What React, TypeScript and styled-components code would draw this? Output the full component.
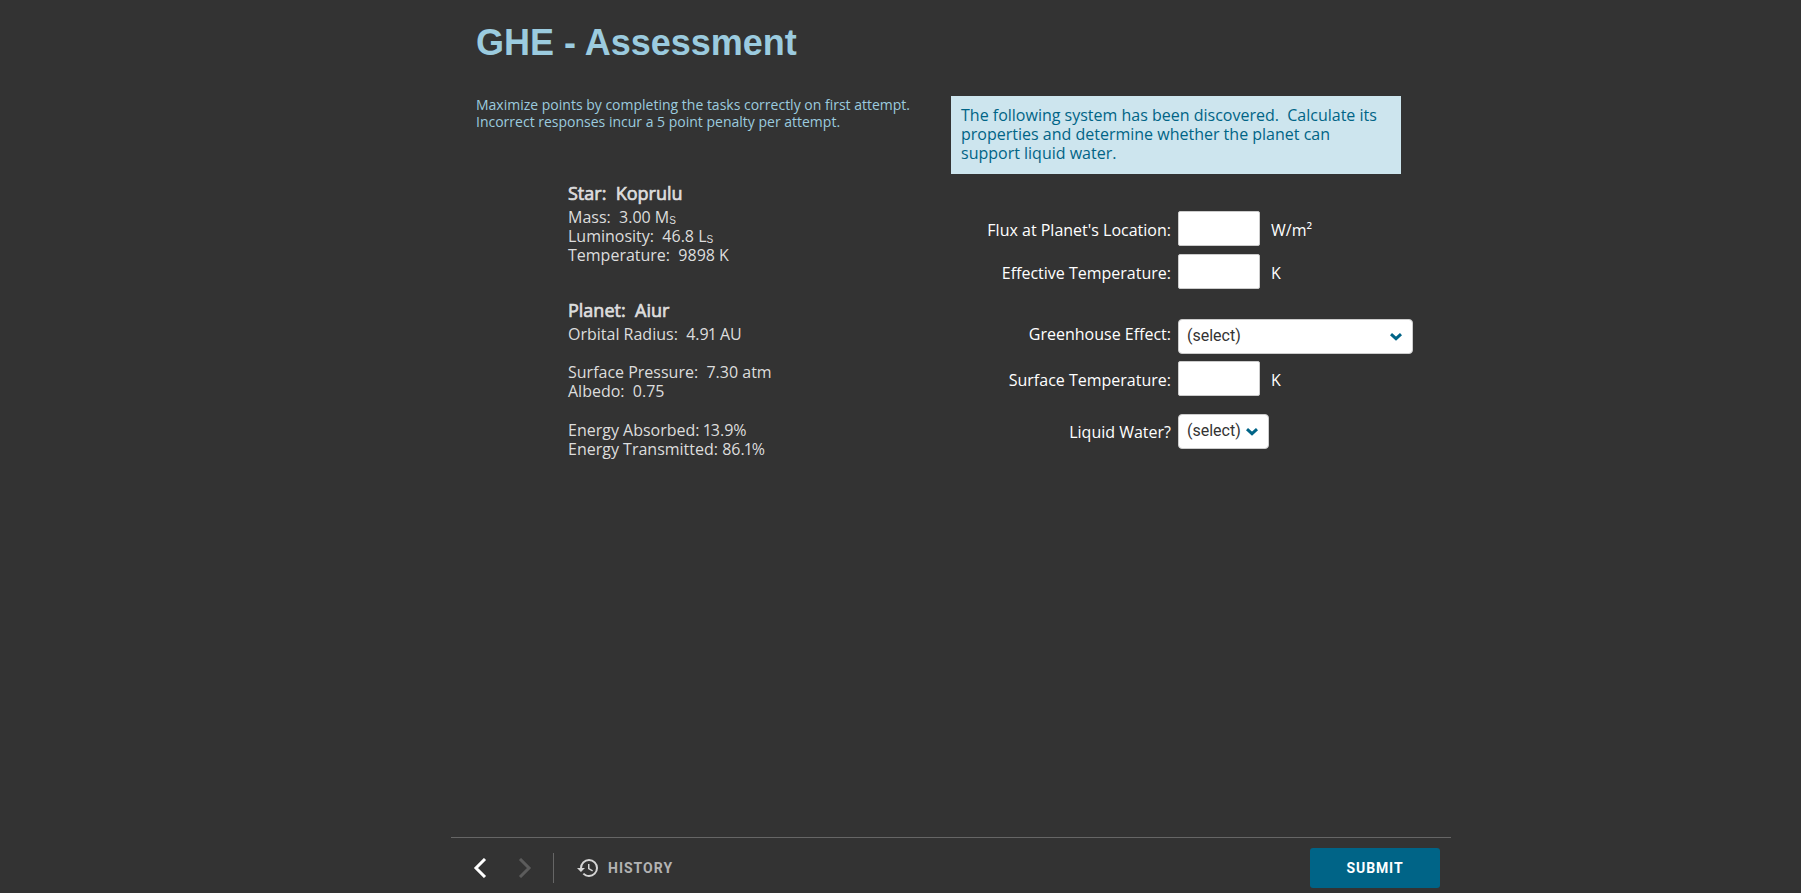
import React from "react";
import styled, { createGlobalStyle } from "styled-components";

const GlobalStyle = createGlobalStyle`
  * { box-sizing: border-box; }
  body { margin: 0; background: #333333; }
`;

const Page = styled.div`
  height: 893px;
  padding-left: 451px;
  background: #333333;
  font-family: "Open Sans", sans-serif;
  font-size: 16px;
  line-height: 19.2px;
  color: #dddddd;
  overflow: hidden;
`;

const Stage = styled.main`
  width: 1000px;
  height: 893px;
  display: flex;
  flex-direction: column;
`;

const Title = styled.h1`
  margin: 0;
  padding: 21px 25px 0;
  height: 96px;
  font: bold 36px/44px "Liberation Sans", Arial, sans-serif;
  color: #9bcbdf;
`;

const Columns = styled.div`
  flex: 1;
  display: grid;
  grid-template-columns: 500px 500px;
`;

const Intro = styled.p`
  margin: 0;
  padding-left: 25px;
  height: 85px;
  font-size: 14px;
  line-height: 17px;
  color: #9bcbdf;
  white-space: nowrap;
`;

const Facts = styled.section`
  padding-left: 117px;
  white-space: pre;
`;

const FactGroup = styled.div<{ $gap: number }>`
  margin-bottom: ${(p) => p.$gap}px;
`;

const FactHeading = styled.h2`
  margin: 0 0 3px;
  font-size: 18px;
  font-weight: 400;
  line-height: 24px;
  -webkit-text-stroke: 0.7px currentColor;
`;

const Sub = styled.span`
  font-family: "Liberation Sans", Arial, sans-serif;
  font-size: 10px;
  line-height: 1;
  position: relative;
  top: 1px;
`;

const TightOne = styled.span`
  margin: 0 -1px;
`;

const Notice = styled.p`
  margin: 0;
  width: 450px;
  height: 78px;
  padding: 10px;
  background: #cde5ee;
  color: #006486;
  white-space: pre;
`;

const Form = styled.form`
  padding-top: 37px;
`;

const Row = styled.div<{ $gap: number }>`
  display: flex;
  height: 35px;
  margin-bottom: ${(p) => p.$gap}px;
  color: #ffffff;
`;

const Label = styled.label<{ $drop: number }>`
  width: 220px;
  margin-right: 7px;
  padding-top: ${(p) => p.$drop}px;
  text-align: right;
`;

const NumberField = styled.input`
  width: 82px;
  height: 35px;
  margin: 0 11px 0 0;
  border: 1px solid #cccccc;
  border-radius: 2px;
  background: #ffffff;
`;

const Unit = styled.span`
  padding-top: 10px;
`;

const SelectBox = styled.button<{ $width: number }>`
  display: flex;
  justify-content: space-between;
  align-items: center;
  width: ${(p) => p.$width}px;
  height: 35px;
  padding: 0 10px 2px 8px;
  border: 1px solid #cccccc;
  border-radius: 4px;
  background: #ffffff;
  color: #333333;
  font: 16px/19px Roboto, sans-serif;
`;

const CaretIcon = styled.svg`
  width: 12px;
  height: 8px;
  margin-top: 3px;
`;

const Footer = styled.footer`
  height: 56px;
  padding: 10px 11px 0 20px;
  border-top: 1px solid #666666;
  display: flex;
  align-items: flex-start;
`;

const NavButton = styled.button`
  width: 44px;
  height: 40px;
  padding: 0;
  border: 0;
  background: none;
  display: flex;
  align-items: center;
`;

const Divider = styled.div`
  width: 1px;
  height: 30px;
  margin: 5px 23px 0 -6px;
  background: #666666;
`;

const HistoryButton = styled.button`
  display: flex;
  align-items: center;
  gap: 10px;
  height: 40px;
  padding: 0;
  border: 0;
  background: none;
  color: #b3b3b3;
  font: bold 14px/16px Roboto, sans-serif;
  letter-spacing: 1px;
`;

const SubmitButton = styled.button`
  width: 130px;
  height: 40px;
  margin-left: auto;
  border: 0;
  border-radius: 3px;
  background: #006487;
  color: #ffffff;
  font: bold 14px/16px Roboto, sans-serif;
  letter-spacing: 0.9px;
`;

const Caret = () => (
  <CaretIcon viewBox="0 0 12 8">
    <path d="M1 1.2 6 5.7l5-4.500" fill="none" stroke="#006487" strokeWidth="3" />
  </CaretIcon>
);

const HistoryIcon = () => (
  <svg width="21" height="18" viewBox="0 0 21 18" fill="#d6d6d6">
    <path d="M12 0a9 9 0 0 0-9 9H0l3.9 3.9.07.14L8 9H5a7 7 0 1 1 7 7c-1.930 0-3.680-.79-4.940-2.060l-1.420 1.420A8.950 8.950 0 0 0 12 18a9 9 0 0 0 0-18Zm-1 5v5l4.280 2.540.72-1.210-3.500-2.080V5H11Z" />
  </svg>
);

export default function App() {
  return (
    <>
      <GlobalStyle />
      <Page>
        <Stage>
          <Title>GHE - Assessment</Title>
          <Columns>
            <div>
              <Intro>
                Maximize points by completing the tasks correctly on first attempt.
                <br />
                Incorrect responses incur a 5 point penalty per attempt.
              </Intro>
              <Facts>
                <FactGroup $gap={32}>
                  <FactHeading>{"Star:  Koprulu"}</FactHeading>
                  <div>{"Mass:  3.00 M"}<Sub>S</Sub></div>
                  <div>{"Luminosity:  46.8 L"}<Sub>S</Sub></div>
                  <div>{"Temperature:  9898 K"}</div>
                </FactGroup>
                <FactGroup $gap={19.2}>
                  <FactHeading>{"Planet:  Aiur"}</FactHeading>
                  <div>{"Orbital Radius:  4.9"}<TightOne>1</TightOne>{" AU"}</div>
                </FactGroup>
                <FactGroup $gap={19.2}>
                  <div>{"Surface Pressure:  7.30 atm"}</div>
                  <div>{"Albedo:  0.75"}</div>
                </FactGroup>
                <FactGroup $gap={0}>
                  <div>{"Energy Absorbed: "}<TightOne>1</TightOne>3.9%</div>
                  <div>{"Energy Transmitted: 86."}<TightOne>1</TightOne>%</div>
                </FactGroup>
              </Facts>
            </div>
            <div>
              <Notice>
                {"The following system has been discovered.  Calculate its\nproperties and determine whether the planet can\nsupport liquid water."}
              </Notice>
              <Form>
                <Row $gap={8}>
                  <Label $drop={10}>Flux at Planet's Location:</Label>
                  <NumberField />
                  <Unit>W/m²</Unit>
                </Row>
                <Row $gap={30}>
                  <Label $drop={10}>Effective Temperature:</Label>
                  <NumberField />
                  <Unit>K</Unit>
                </Row>
                <Row $gap={7}>
                  <Label $drop={6}>Greenhouse Effect:</Label>
                  <SelectBox type="button" $width={235}>(select)<Caret /></SelectBox>
                </Row>
                <Row $gap={18}>
                  <Label $drop={10}>Surface Temperature:</Label>
                  <NumberField />
                  <Unit>K</Unit>
                </Row>
                <Row $gap={0}>
                  <Label $drop={9}>Liquid Water?</Label>
                  <SelectBox type="button" $width={91}>(select)<Caret /></SelectBox>
                </Row>
              </Form>
            </div>
          </Columns>
          <Footer>
            <NavButton aria-label="Previous">
              <svg width="20" height="20" viewBox="0 0 20 20">
                <path d="M14 1 5 10l9 9" fill="none" stroke="#ffffff" strokeWidth="3" />
              </svg>
            </NavButton>
            <NavButton aria-label="Next">
              <svg width="20" height="20" viewBox="0 0 20 20">
                <path d="M5 1l9 9-9 9" fill="none" stroke="#5c5c5c" strokeWidth="3" />
              </svg>
            </NavButton>
            <Divider />
            <HistoryButton>
              <HistoryIcon />
              HISTORY
            </HistoryButton>
            <SubmitButton>SUBMIT</SubmitButton>
          </Footer>
        </Stage>
      </Page>
    </>
  );
}
